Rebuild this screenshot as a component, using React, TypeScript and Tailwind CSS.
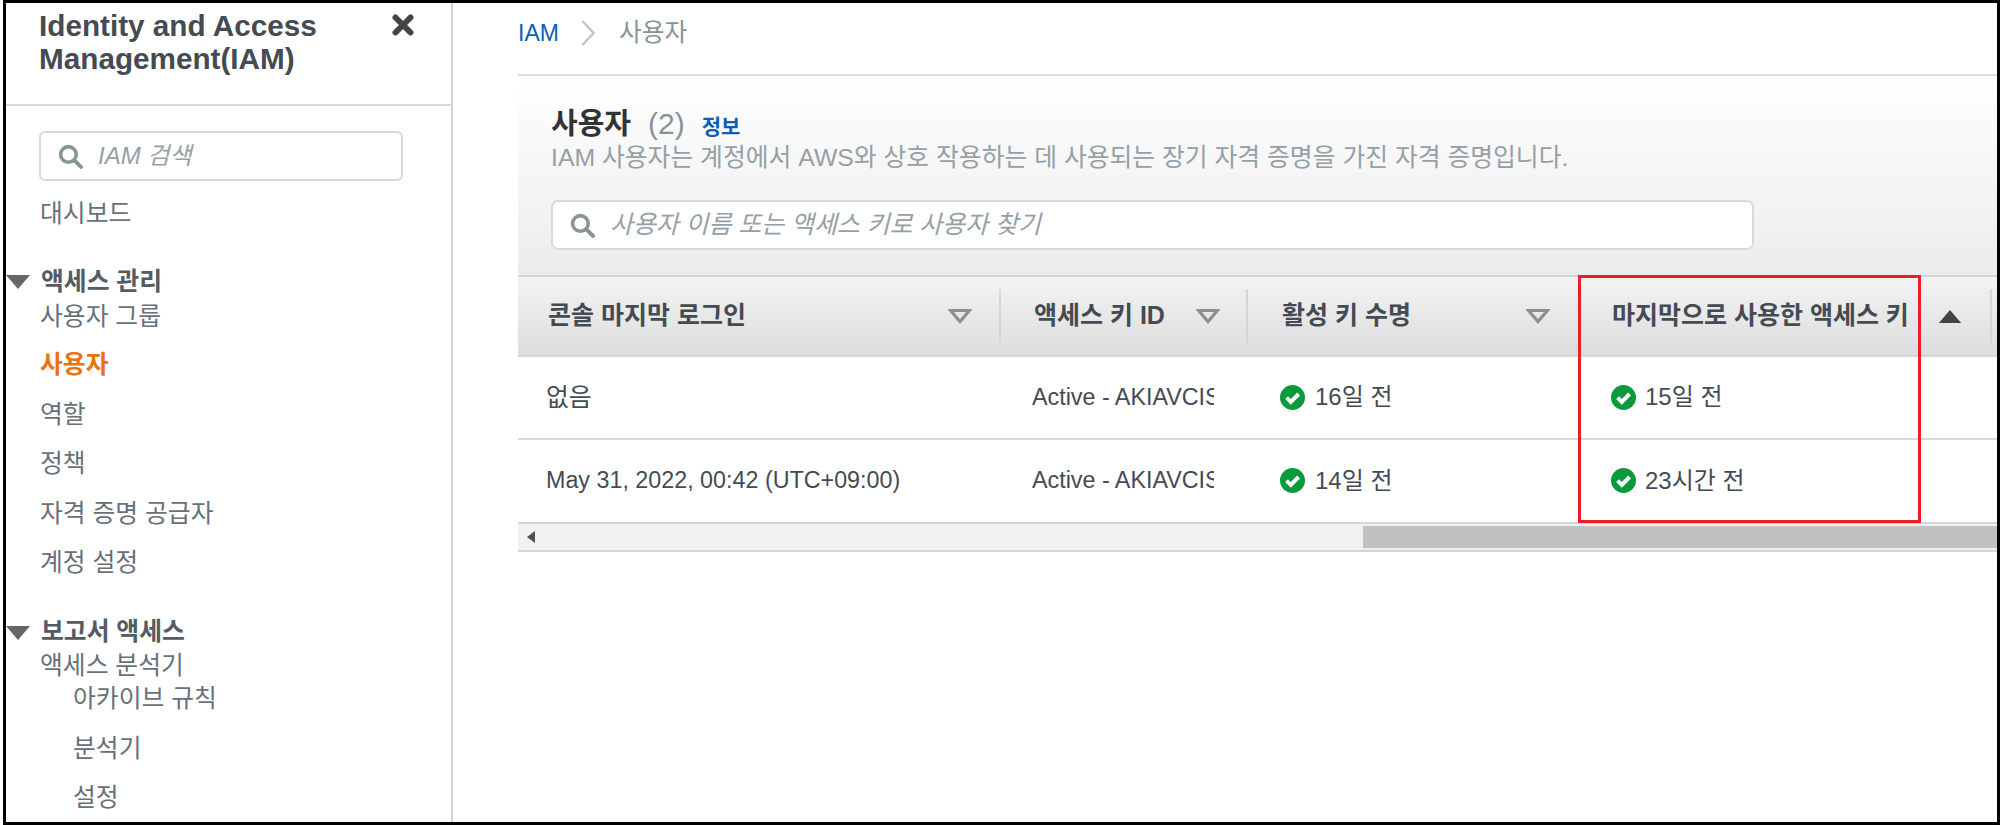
const font = "font-['Liberation_Sans','Noto_Sans_CJK_KR',sans-serif]";

function SearchIcon({ className }: { className: string }) {
  return (
    <svg viewBox="0 0 24 24" className={className} fill="none">
      <circle cx="10" cy="10" r="7.5" stroke="#879596" strokeWidth="3.4" />
      <path d="M15.5 15.5 L22 22" stroke="#879596" strokeWidth="3.8" strokeLinecap="round" />
    </svg>
  );
}

function Triangle() {
  return (
    <svg viewBox="0 0 24 14" className="w-[24px] h-[14px] shrink-0">
      <path d="M0 0H24L12 14Z" fill="#666" />
    </svg>
  );
}

function SortDown() {
  return (
    <svg viewBox="0 0 24 15" className="w-[24px] h-[15px] block">
      <path d="M2.5 1.5H21.5L12 12.5Z" fill="none" stroke="#8f8f8f" strokeWidth="3.2" />
    </svg>
  );
}

function SortUp() {
  return (
    <svg viewBox="0 0 24 14" className="w-[24px] h-[13px] block">
      <path d="M0 14H24L12 0Z" fill="#444" />
    </svg>
  );
}

function Check() {
  return (
    <svg viewBox="0 0 25 25" className="w-[25px] h-[25px] shrink-0">
      <circle cx="12.5" cy="12.5" r="12.5" fill="#0a9a3c" />
      <path d="M6.6 12.6 L10.8 16.8 L18.6 9" fill="none" stroke="#fff" strokeWidth="4" />
    </svg>
  );
}

function NavItem({ label, sub, active }: { label: string; sub?: boolean; active?: boolean }) {
  return (
    <div className={`h-[49.5px] flex items-center text-[24.8px] leading-none ${sub ? "pl-[67px]" : "pl-[34px]"} ${active ? "text-[#ec7211] font-bold" : "text-[#687078]"}`}>
      {label}
    </div>
  );
}

function Section({ label }: { label: string }) {
  return (
    <div className="h-[34px] flex items-center gap-[11px] text-[24.8px] font-bold text-[#545b64] leading-none">
      <Triangle />
      <span>{label}</span>
    </div>
  );
}

function Row({ login, key1, key2, border, hangul }: { login: string; key1: string; key2: string; border?: boolean; hangul?: boolean }) {
  return (
    <div className={`grid grid-cols-[483px_247px_331px_413px_1fr] h-[82.5px] items-center text-[23.3px] text-[#444b53] bg-white ${border ? "border-b-2 border-[#d5dbdb]" : ""}`}>
      <div className={`pl-[28px] ${hangul ? "text-[24.8px]" : ""}`}>{login}</div>
      <div className="pl-[31px]">
        <div className="w-[182px] overflow-hidden whitespace-nowrap">Active - AKIAVCIS</div>
      </div>
      <div className="pl-[32px] flex items-center gap-[10px] text-[24px]">
        <Check />
        <span>{key1}</span>
      </div>
      <div className="pl-[32px] flex items-center gap-[9px] text-[24px]">
        <Check />
        <span>{key2}</span>
      </div>
      <div />
    </div>
  );
}

function HeaderCell({ label, divider, children, pl }: { label: string; divider?: boolean; children: React.ReactNode; pl: string }) {
  return (
    <div className={`h-[54px] flex items-center justify-between ${pl} ${divider ? "border-r-2 border-[#d5d5d5]" : ""}`}>
      <span className="whitespace-nowrap">{label}</span>
      {children}
    </div>
  );
}

export default function App() {
  return (
    <div className={`${font} h-[825px] w-[2000px] bg-white pl-[3px] overflow-hidden`}>
      <div className="h-full flex border-l-[3px] border-t-[3px] border-r-[3px] border-b-[3px] border-black">
        <aside className="w-[447px] shrink-0 border-r-2 border-[#d5d5d5] h-full">
          <div className="h-[103px] border-b-2 border-[#d5dbdb] flex justify-between pl-[33px] pr-[37px] pt-[7px]">
            <h1 className="text-[29.7px] leading-[32.5px] font-bold text-[#444b53]">
              Identity and Access
              <br />
              Management(IAM)
            </h1>
            <svg viewBox="0 0 22 22" className="w-[22px] h-[22px] mt-[4px]">
              <path d="M3.5 3.5 L18.5 18.5 M18.5 3.5 L3.5 18.5" stroke="#444" strokeWidth="6" strokeLinecap="round" />
            </svg>
          </div>
          <div className="pt-[25px]">
            <div className="ml-[33px] w-[364px] h-[50px] border-2 border-[#d5dbdb] rounded-[6px] flex items-center pl-[17px] gap-[15px]">
              <SearchIcon className="w-[25px] h-[25px]" />
              <span className="italic text-[24px] text-[#95a0a6]">IAM 검색</span>
            </div>
            <div className="h-[63px] flex items-center pl-[34px] pt-[3px] text-[24.8px] text-[#687078]">대시보드</div>
            <div className="h-[21px]" />
            <Section label="액세스 관리" />
            <div className="h-[32px] flex items-center pl-[34px] pt-[4px] text-[24.8px] text-[#687078]">사용자 그룹</div>
            <div className="h-[10px]" />
            <NavItem label="사용자" active />
            <NavItem label="역할" />
            <NavItem label="정책" />
            <NavItem label="자격 증명 공급자" />
            <NavItem label="계정 설정" />
            <div className="h-[27px]" />
            <Section label="보고서 액세스" />
            <div className="h-[33px] flex items-center pl-[34px] text-[24.8px] text-[#687078]">액세스 분석기</div>
            <div className="h-[33px] flex items-center pl-[67px] text-[24.8px] text-[#687078]">아카이브 규칙</div>
            <div className="h-[9px]" />
            <NavItem label="분석기" sub />
            <NavItem label="설정" sub />
          </div>
        </aside>
        <main className="flex-1 min-w-0 pl-[65px] flex flex-col">
          <nav className="h-[71px] flex items-center pb-[11px] text-[24.8px] text-[#879596] shrink-0">
            <span className="text-[#0b5fb8] text-[23px]">IAM</span>
            <svg viewBox="0 0 14 28" className="w-[14px] h-[26px] ml-[22px] mr-[24px]">
              <path d="M1 1 L13 14 L1 27" fill="none" stroke="#c4c4c4" strokeWidth="2.5" />
            </svg>
            <span>사용자</span>
          </nav>
          <section className="relative">
            <div className="h-[201px] border-t-2 border-[#dcdcdc] bg-gradient-to-b from-white to-[#ececec] pl-[33px] pt-[25px] shrink-0">
              <div className="flex items-baseline h-[40px]">
                <h2 className="text-[29px] font-bold text-[#333]">사용자</h2>
                <span className="ml-[17px] text-[30px] text-[#879596]">(2)</span>
                <a className="ml-[17px] text-[21px] font-bold text-[#0b5fb8]">정보</a>
              </div>
              <p className="text-[24.8px] leading-[34px] text-[#95a0a6] whitespace-nowrap">IAM 사용자는 계정에서 AWS와 상호 작용하는 데 사용되는 장기 자격 증명을 가진 자격 증명입니다.</p>
              <div className="mt-[25px] w-[1203px] h-[50px] bg-white border-2 border-[#d5dbdb] rounded-[7px] flex items-center pl-[17px] gap-[15px]">
                <SearchIcon className="w-[25px] h-[25px]" />
                <span className="italic text-[24.9px] text-[#95a0a6]">사용자 이름 또는 액세스 키로 사용자 찾기</span>
              </div>
            </div>
            <div className="grid grid-cols-[483px_247px_331px_413px_1fr] h-[82px] items-center border-t-2 border-b-2 border-[#d5d5d5] bg-gradient-to-b from-[#f3f3f3] to-[#dddddd] text-[25px] font-bold text-[#444b53]">
              <HeaderCell label="콘솔 마지막 로그인" divider pl="pl-[30px] pr-[27px]"><SortDown /></HeaderCell>
              <HeaderCell label="액세스 키 ID" divider pl="pl-[33px] pr-[26px]"><SortDown /></HeaderCell>
              <HeaderCell label="활성 키 수명" pl="pl-[34px] pr-[29px]"><SortDown /></HeaderCell>
              <HeaderCell label="마지막으로 사용한 액세스 키" divider pl="pl-[33px] pr-[28px]"><SortUp /></HeaderCell>
              <div />
            </div>
            <Row login="없음" key1="16일 전" key2="15일 전" border hangul />
            <Row login="May 31, 2022, 00:42 (UTC+09:00)" key1="14일 전" key2="23시간 전" />
            <div className="h-[30px] border-t-2 border-b-2 border-[#d5d5d5] bg-[#f1f1f1] flex items-center">
              <svg viewBox="0 0 8 12" className="w-[8px] h-[12px] ml-[9px]">
                <path d="M8 0V12L0 6Z" fill="#505050" />
              </svg>
              <div className="ml-[828px] flex-1 h-[22px] bg-[#c1c1c1]" />
            </div>
            <div className="absolute left-[1060px] top-[201px] w-[343px] h-[248px] border-[3px] border-[#ee1c25] pointer-events-none" />
          </section>
        </main>
      </div>
    </div>
  );
}
